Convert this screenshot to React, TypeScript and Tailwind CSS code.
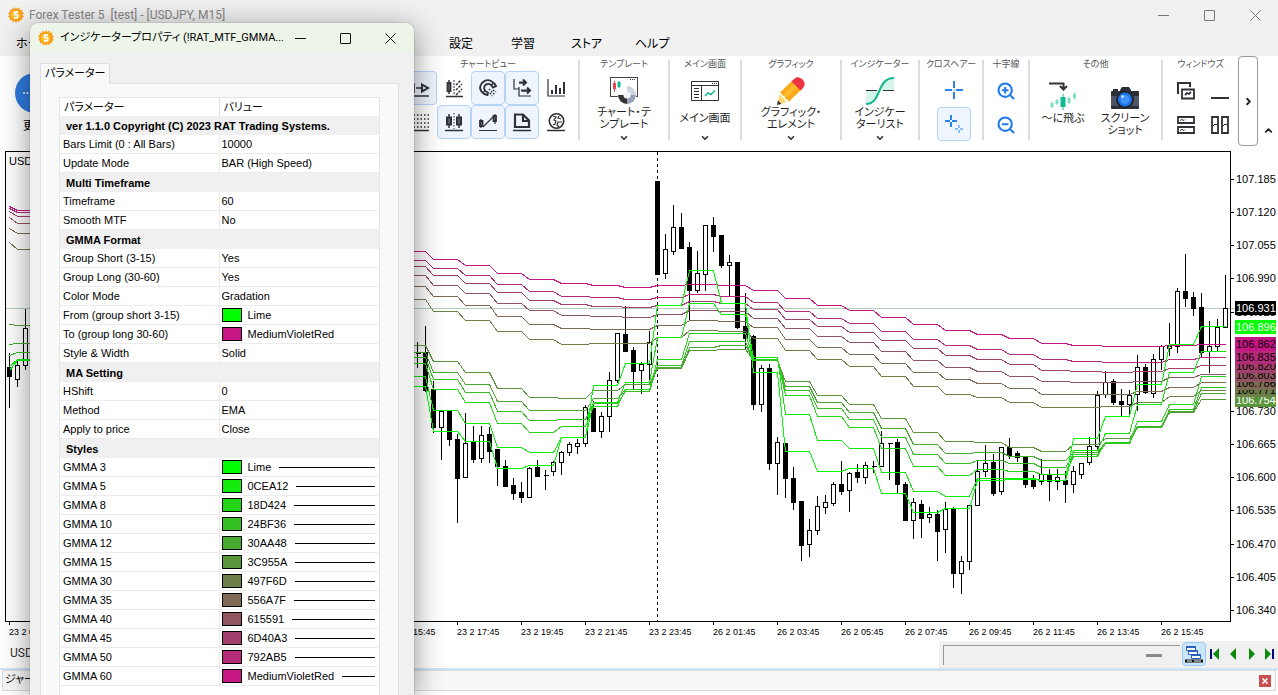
import type { ReactNode } from 'react'
import { ZoomIn, ZoomOut, ChevronDown, ChevronUp, ChevronRight } from 'lucide-react'

const UI_FONT = "font-['Roboto','Noto_Sans_CJK_JP',sans-serif] [font-feature-settings:'palt']"

// [high, body top, body bottom, low, filled]
type Candle = [number, number, number, number, 0 | 1]

const CANDLES: Candle[] = [
  [341, 353, 353, 367, 1], [325, 352, 390, 391, 1], [380, 389, 427, 432, 1], [411, 411, 427, 459, 0],
  [409, 410, 439, 445, 1], [433, 439, 478, 522, 1], [412, 443, 477, 477, 0], [425, 442, 459, 462, 1],
  [425, 435, 458, 462, 0], [426, 434, 451, 462, 1], [449, 449, 466, 485, 1], [459, 466, 486, 486, 1],
  [477, 485, 493, 499, 1], [481, 492, 497, 502, 1], [466, 468, 497, 497, 0], [459, 467, 476, 476, 1],
  [469, 475, 475, 489, 1], [460, 462, 471, 475, 0], [450, 452, 462, 474, 0], [441, 444, 452, 455, 0],
  [438, 443, 446, 453, 0], [404, 407, 443, 446, 0], [400, 408, 431, 431, 1], [411, 416, 431, 437, 0],
  [371, 380, 416, 431, 0], [332, 333, 380, 382, 0], [305, 334, 351, 351, 1], [346, 350, 371, 389, 1],
  [361, 364, 370, 393, 0], [330, 342, 364, 382, 0], [181, 181, 274, 274, 1], [233, 249, 273, 278, 0],
  [204, 227, 251, 254, 0], [212, 227, 248, 248, 1], [241, 247, 290, 320, 1], [250, 273, 290, 292, 0],
  [224, 225, 274, 290, 0], [216, 225, 236, 251, 1], [235, 235, 265, 267, 1], [254, 262, 265, 296, 0],
  [262, 262, 327, 328, 1], [292, 326, 338, 349, 1], [334, 336, 404, 409, 1], [364, 368, 404, 411, 0],
  [363, 368, 463, 469, 1], [436, 442, 463, 494, 0], [443, 443, 478, 497, 1], [466, 478, 502, 509, 1],
  [501, 501, 545, 560, 1], [518, 530, 544, 556, 0], [495, 506, 530, 534, 0], [494, 502, 507, 513, 0],
  [481, 484, 503, 505, 0], [460, 484, 491, 494, 1], [471, 473, 490, 511, 0], [463, 472, 477, 482, 1],
  [461, 465, 477, 483, 0], [460, 466, 466, 472, 1], [430, 443, 466, 466, 0], [442, 443, 443, 479, 1],
  [438, 442, 484, 492, 1], [481, 484, 520, 520, 1], [497, 502, 520, 538, 0], [499, 504, 518, 537, 1],
  [506, 514, 517, 522, 0], [509, 514, 531, 560, 1], [501, 509, 529, 552, 0], [506, 508, 573, 587, 1],
  [555, 561, 573, 593, 0], [505, 505, 561, 569, 0], [460, 471, 505, 505, 0], [444, 463, 471, 476, 0],
  [453, 462, 493, 495, 1], [447, 447, 491, 494, 0], [437, 447, 455, 458, 1], [450, 453, 457, 461, 1],
  [456, 456, 484, 487, 1], [474, 478, 486, 488, 1], [458, 474, 481, 484, 0], [468, 474, 481, 500, 1],
  [468, 477, 481, 489, 0], [470, 480, 484, 502, 1], [465, 471, 484, 492, 0], [462, 463, 474, 478, 0],
  [436, 446, 462, 464, 0], [390, 395, 446, 450, 0], [370, 382, 394, 397, 0], [378, 381, 402, 404, 1],
  [388, 401, 404, 416, 1], [389, 395, 404, 414, 0], [354, 367, 394, 410, 0], [363, 367, 392, 393, 1],
  [353, 359, 393, 397, 0], [344, 346, 359, 369, 0], [322, 346, 348, 355, 0], [287, 291, 346, 352, 0],
  [253, 291, 298, 306, 1], [291, 297, 308, 315, 1], [292, 307, 352, 357, 1], [320, 346, 351, 372, 0],
  [318, 327, 346, 351, 0], [274, 308, 327, 327, 0],
]

const OLD_CANDLES: Candle[] = [
  [352, 367, 376, 407, 1], [359, 365, 379, 386, 0], [308, 328, 365, 369, 0],
]

// one value per hour block, each block is four bars wide
const AVERAGES = [
  { color: '#c71585', values: [251, 259, 265, 273, 279, 283, 285, 287, 285, 284, 285, 290, 298, 305, 310, 317, 324, 330, 334, 338, 343, 345, 346, 346, 345, 344] },
  { color: '#b52a79', values: [260, 268, 275, 284, 291, 296, 297, 299, 297, 294, 296, 302, 311, 318, 323, 331, 339, 345, 349, 354, 359, 361, 362, 362, 359, 357] },
  { color: '#a3406d', values: [266, 275, 283, 292, 300, 304, 306, 307, 305, 301, 303, 309, 319, 326, 332, 340, 348, 355, 359, 364, 370, 371, 372, 371, 368, 365] },
  { color: '#915561', values: [275, 285, 293, 303, 310, 315, 316, 317, 314, 310, 311, 318, 328, 336, 342, 351, 360, 367, 371, 376, 381, 382, 382, 381, 377, 374] },
  { color: '#7f6a55', values: [286, 296, 305, 316, 324, 328, 329, 329, 325, 320, 321, 327, 339, 347, 354, 363, 372, 379, 383, 388, 394, 394, 394, 391, 387, 382] },
  { color: '#6d7f49', values: [299, 311, 320, 331, 339, 344, 343, 343, 337, 330, 331, 338, 350, 359, 366, 376, 386, 394, 397, 402, 407, 407, 406, 402, 396, 390] },
  { color: '#5a953c', values: [345, 361, 372, 388, 397, 398, 390, 384, 368, 350, 349, 360, 381, 395, 404, 418, 432, 441, 442, 447, 451, 444, 438, 427, 412, 399] },
  { color: '#48aa30', values: [352, 372, 384, 401, 410, 410, 398, 389, 367, 347, 345, 360, 386, 402, 412, 428, 444, 453, 452, 456, 460, 452, 442, 427, 411, 393] },
  { color: '#36bf24', values: [357, 379, 392, 411, 420, 419, 403, 391, 365, 341, 341, 360, 390, 408, 419, 437, 454, 463, 460, 463, 467, 454, 443, 426, 409, 387] },
  { color: '#24d418', values: [363, 389, 402, 423, 432, 426, 406, 389, 359, 333, 333, 359, 395, 416, 427, 448, 466, 475, 469, 471, 474, 456, 442, 421, 404, 376] },
  { color: '#12ea0c', values: [376, 410, 423, 447, 452, 437, 402, 382, 337, 303, 314, 357, 414, 440, 448, 472, 491, 496, 478, 478, 480, 450, 433, 404, 372, 351] },
  { color: '#00ff00', values: [386, 431, 441, 468, 465, 437, 385, 363, 305, 270, 303, 372, 451, 471, 468, 493, 512, 508, 480, 479, 480, 438, 416, 384, 344, 326] },
]

const OLD_AVERAGES = [
  { color: '#c71585', from: 206, to: 210 },
  { color: '#b52a79', from: 208, to: 212 },
  { color: '#a3406d', from: 211, to: 216 },
  { color: '#915561', from: 217, to: 223 },
  { color: '#7f6a55', from: 228, to: 233 },
  { color: '#6d7f49', from: 242, to: 249 },
  { color: '#5a953c', from: 324, to: 325 },
  { color: '#48aa30', from: 344, to: 343 },
  { color: '#36bf24', from: 355, to: 352 },
  { color: '#12ea0c', from: 366, to: 359 },
  { color: '#00ff00', from: 370, to: 360 },
]

const PRICE_LABELS = [
  { y: 179, text: '107.185' },
  { y: 212, text: '107.120' },
  { y: 245, text: '107.055' },
  { y: 278, text: '106.990' },
  { y: 312, text: '106.925' },
  { y: 411, text: '106.730' },
  { y: 444, text: '106.665' },
  { y: 477, text: '106.600' },
  { y: 510, text: '106.535' },
  { y: 544, text: '106.470' },
  { y: 577, text: '106.405' },
  { y: 610, text: '106.340' },
]

// drawn bottom up, so that the higher price covers the lower one
const PRICE_TAGS = [
  { y: 400, text: '106.754', bg: '#5a953c', fg: '#ffffff' },
  { y: 390, text: '106.771', bg: '#6d7f49', fg: '#000000' },
  { y: 383, text: '106.786', bg: '#7f6a55', fg: '#000000' },
  { y: 375, text: '106.803', bg: '#915561', fg: '#000000' },
  { y: 366, text: '106.820', bg: '#a3406d', fg: '#000000' },
  { y: 357, text: '106.835', bg: '#b52a79', fg: '#000000' },
  { y: 344, text: '106.862', bg: '#c71585', fg: '#000000' },
  { y: 327, text: '106.896', bg: '#00ff00', fg: '#ffffff' },
  { y: 308, text: '106.931', bg: '#000000', fg: '#ffffff' },
]

const TIME_LABELS = [
  { x: 9, text: '23 2 03:45' },
  { x: 393, text: '23 2 15:45' },
  { x: 457, text: '23 2 17:45' },
  { x: 521, text: '23 2 19:45' },
  { x: 585, text: '23 2 21:45' },
  { x: 649, text: '23 2 23:45' },
  { x: 713, text: '26 2 01:45' },
  { x: 777, text: '26 2 03:45' },
  { x: 841, text: '26 2 05:45' },
  { x: 905, text: '26 2 07:45' },
  { x: 969, text: '26 2 09:45' },
  { x: 1033, text: '26 2 11:45' },
  { x: 1097, text: '26 2 13:45' },
  { x: 1161, text: '26 2 15:45' },
]

type Row =
  | { kind: 'section'; label: string }
  | { kind: 'item'; label: string; value: string; swatch?: string; line?: boolean }

const ROWS: Row[] = [
  { kind: 'section', label: 'ver 1.1.0 Copyright (C) 2023 RAT Trading Systems.' },
  { kind: 'item', label: 'Bars Limit (0 : All Bars)', value: '10000' },
  { kind: 'item', label: 'Update Mode', value: 'BAR (High Speed)' },
  { kind: 'section', label: 'Multi Timeframe' },
  { kind: 'item', label: 'Timeframe', value: '60' },
  { kind: 'item', label: 'Smooth MTF', value: 'No' },
  { kind: 'section', label: 'GMMA Format' },
  { kind: 'item', label: 'Group Short (3-15)', value: 'Yes' },
  { kind: 'item', label: 'Group Long (30-60)', value: 'Yes' },
  { kind: 'item', label: 'Color Mode', value: 'Gradation' },
  { kind: 'item', label: 'From (group short 3-15)', value: 'Lime', swatch: '#00ff00' },
  { kind: 'item', label: 'To (group long 30-60)', value: 'MediumVioletRed', swatch: '#c71585' },
  { kind: 'item', label: 'Style & Width', value: 'Solid' },
  { kind: 'section', label: 'MA Setting' },
  { kind: 'item', label: 'HShift', value: '0' },
  { kind: 'item', label: 'Method', value: 'EMA' },
  { kind: 'item', label: 'Apply to price', value: 'Close' },
  { kind: 'section', label: 'Styles' },
  { kind: 'item', label: 'GMMA 3', value: 'Lime', swatch: '#00ff00', line: true },
  { kind: 'item', label: 'GMMA 5', value: '0CEA12', swatch: '#12ea0c', line: true },
  { kind: 'item', label: 'GMMA 8', value: '18D424', swatch: '#24d418', line: true },
  { kind: 'item', label: 'GMMA 10', value: '24BF36', swatch: '#36bf24', line: true },
  { kind: 'item', label: 'GMMA 12', value: '30AA48', swatch: '#48aa30', line: true },
  { kind: 'item', label: 'GMMA 15', value: '3C955A', swatch: '#5a953c', line: true },
  { kind: 'item', label: 'GMMA 30', value: '497F6D', swatch: '#6d7f49', line: true },
  { kind: 'item', label: 'GMMA 35', value: '556A7F', swatch: '#7f6a55', line: true },
  { kind: 'item', label: 'GMMA 40', value: '615591', swatch: '#915561', line: true },
  { kind: 'item', label: 'GMMA 45', value: '6D40A3', swatch: '#a3406d', line: true },
  { kind: 'item', label: 'GMMA 50', value: '792AB5', swatch: '#b52a79', line: true },
  { kind: 'item', label: 'GMMA 60', value: 'MediumVioletRed', swatch: '#c71585', line: true },
]

function averagePoints(values: number[]) {
  return values
    .map((y, n) => {
      const start = n === 0 ? 380 : 401 + n * 32
      return `${start},${y} ${425 + n * 32},${y}`
    })
    .join(' ')
}

function Bar({ x, candle }: { x: number; candle: Candle }) {
  const [high, top, bottom, low, filled] = candle
  if (top === bottom) {
    return <path d={`M${x} ${high}V${low}M${x - 2} ${top}H${x + 3}`} stroke="#000" />
  }
  return (
    <>
      <path d={`M${x} ${high}V${low}`} stroke="#000" />
      <rect x={x - 2} y={top} width={4} height={bottom - top} fill={filled ? '#000' : '#fff'} stroke="#000" />
    </>
  )
}

function Chart() {
  return (
    <svg viewBox="0 150 1278 491" className="block w-full font-['Liberation_Sans',Arial,sans-serif]" role="img" aria-label="USDJPY M15">
      <g transform="translate(.5 .5)" fill="none" shapeRendering="crispEdges">
        <path d="M5 308H1235" stroke="#b4d0b8" />
        <path d="M657 151V621" stroke="#000" strokeDasharray="3 3" />
        {OLD_CANDLES.map((candle, i) => (
          <Bar key={i} x={9 + i * 8} candle={candle} />
        ))}
        {CANDLES.map((candle, i) => (
          <Bar key={i} x={417 + i * 8} candle={candle} />
        ))}
        {OLD_AVERAGES.map((line) => (
          <polyline key={line.color} points={`9,${line.from} 17,${line.to} 40,${line.to}`} stroke={line.color} />
        ))}
        {AVERAGES.map((line) => (
          <polyline key={line.color} points={averagePoints(line.values)} stroke={line.color} />
        ))}
        <path d="M5 151H1230V621H5Z" stroke="#000" />
        {PRICE_LABELS.map((p) => (
          <path key={p.y} d={`M1230 ${p.y}h3`} stroke="#000" />
        ))}
        {TIME_LABELS.map((t) => (
          <path key={t.x} d={`M${t.x} 621v3`} stroke="#000" />
        ))}
      </g>
      <text x={9} y={165} fontSize={11}>USDJPY</text>
      {PRICE_LABELS.map((p) => (
        <text key={p.y} x={1236} y={p.y + 4} fontSize={11}>{p.text}</text>
      ))}
      {PRICE_TAGS.map((p) => (
        <g key={p.y}>
          <rect x={1235} y={p.y - 7} width={41} height={14} fill={p.bg} shapeRendering="crispEdges" />
          <text x={1236} y={p.y + 4} fontSize={11} fill={p.fg}>{p.text}</text>
        </g>
      ))}
      {TIME_LABELS.map((t) => (
        <text key={t.x} x={t.x} y={635} fontSize={9}>{t.text}</text>
      ))}
    </svg>
  )
}

function AppIcon() {
  return (
    <svg viewBox="0 0 16 16" className="h-4 w-4 shrink-0">
      <path
        d="M8 0l1.200 2L11.400.6l.4 2.300 2.500-.3-.5 2.300 2.200.9L14.500 8l1.500 2-2.200.9.5 2.300-2.500-.3-.4 2.400-2.200-1.300L8 16l-1.200-2-2.200 1.300-.4-2.400-2.500.3.5-2.300L0 10l1.500-2L0 5.800l2.200-.9-.5-2.300 2.500.3.4-2.300L6.800 2z"
        fill="#f9a01b"
      />
      <circle cx="7.600" cy="8" r="4.600" fill="#fbc02d" />
      <path d="M10 5.200H6.600v2.400h1.900c1.600 0 1.600 3.200 0 3.200H6" fill="none" stroke="#fff" strokeWidth="1.700" />
    </svg>
  )
}

function Divider() {
  return <div className="mt-1 h-20 w-0.5 shrink-0 bg-[#dcdcdc]" />
}

function Group({ title, className, children }: { title: string; className: string; children: ReactNode }) {
  return (
    <section className={`flex shrink-0 flex-col items-center ${className}`}>
      <h2 className="h-[15px] text-[9px] leading-4 whitespace-nowrap text-[#555]">{title}</h2>
      {children}
    </section>
  )
}

function ToolButton({ label, active, children }: { label: string; active?: boolean; children: ReactNode }) {
  return (
    <button
      type="button"
      aria-label={label}
      className={`flex h-[34px] w-[34px] items-center justify-center rounded border ${active ? 'border-[#b5d3f7] bg-[#eef5fd]' : 'border-transparent'}`}
    >
      <svg viewBox="0 0 20 20" className="h-5 w-5" fill="none" stroke="#2f3136" strokeWidth="1.500">
        {children}
      </svg>
    </button>
  )
}

function BigButton({ lines, icon, arrow = true }: { lines: string[]; icon: ReactNode; arrow?: boolean }) {
  return (
    <button type="button" className="flex flex-col items-center pt-1">
      <span className={`flex items-center justify-center ${arrow ? 'h-8' : 'h-[34px]'}`}>{icon}</span>
      <span className={`flex flex-col text-[11px] leading-3 whitespace-nowrap text-[#1f1f1f] ${arrow ? 'h-6 justify-center' : ''}`}>
        {lines.map((line) => (
          <span key={line}>{line}</span>
        ))}
      </span>
      {arrow && <ChevronDown className="mt-0.5" size={10} strokeWidth={4} color="#333" />}
    </button>
  )
}

function ChartViewTools() {
  return (
    <div className="grid grid-cols-5">
      <ToolButton label="右端へシフト" active>
        <path d="M1 18H19M4 5v10M6 10h5" />
        <path d="M12 6.500l6 3.500-6 3.500z" strokeWidth="2" />
      </ToolButton>
      <ToolButton label="余白">
        <path d="M2 18.500H19M5 2v14" />
        <path d="M3.500 5h3v8h-3z" strokeWidth="1.800" />
        <path d="M10 2v15" strokeDasharray="2 1" strokeWidth="1" />
        <path d="M12 7l5-5M12 12l6-6M12 17l6-6" strokeDasharray="2.500 1" />
      </ToolButton>
      <ToolButton label="マグネット" active>
        <path
          d="M9.500 17C4 16 1 11.500 2.500 7.500 4 3 9 1 13 3c2 1 4 3 5 5l-3 1.500C13.500 7 11.500 5.500 9.500 6 7 6.500 5.500 9 6.500 11.500c.6 1.500 2 2.500 3.500 3z"
          strokeWidth="1.800"
        />
        <path d="M15 5.500l-2 2M5.500 14l2-2" strokeWidth="1.500" />
        <path d="M11 11l6 6M15 12l3 2M12 15l2 3" strokeDasharray="1.500 1.500" />
      </ToolButton>
      <ToolButton label="スクロール" active>
        <path d="M2 1v10h5M7 5h6M7 9v9h12M10 13h6" strokeWidth="1.200" />
        <path d="M7 4.500h7M11 1.500l3 3-3 3M9 12.500h9M15 9.500l3 3-3 3" strokeWidth="2" />
      </ToolButton>
      <ToolButton label="出来高">
        <path d="M2 1v17H19" strokeWidth="1.200" />
        <path d="M6 12v4M10 7v9M14 10v6M18 4v12" strokeWidth="2" />
      </ToolButton>
      <ToolButton label="グリッド">
        <path d="M0 3H19M0 7H19M0 11H19M0 15H19" strokeDasharray="1.500 2" />
        <path d="M0 18.500H19" />
      </ToolButton>
      <ToolButton label="ローソク足" active>
        <path d="M1 18.500H19M5 2v14M15 2v14" />
        <path d="M3 5.500h4v7H3zM13 5.500h4v7h-4z" strokeWidth="2" />
        <path d="M10 1v16" strokeDasharray="1.500 1.500" strokeWidth="1" />
      </ToolButton>
      <ToolButton label="ラインチャート" active>
        <path d="M1 18.500H19M3 7v9M17 2v10M5 15L16 4" strokeWidth="1.200" />
        <path d="M2 9h2.500v5H2zM15.500 4H18v5h-2.500z" strokeWidth="1.800" />
      </ToolButton>
      <ToolButton label="ページ" active>
        <path d="M1 18.500H19" />
        <path d="M3 2.500h8l6 6v6.500H3zM11 3v6h6" strokeWidth="2.200" />
      </ToolButton>
      <ToolButton label="タイムゾーン">
        <path d="M1 18.500H19" />
        <circle cx="10.500" cy="9" r="7.200" strokeWidth="1.600" />
        <path d="M7 4l3 1-2 3 2 1-1 3-2 1M13 4l-1 2 3 1M16 10h-4l-1 3 2 2" strokeWidth="1.200" />
      </ToolButton>
    </div>
  )
}

function TemplateIcon() {
  return (
    <svg viewBox="0 0 28 28" className="h-7 w-7">
      <rect x=".5" y=".5" width="27" height="19" fill="#fff" stroke="#444" />
      <path d="M20 2.500h6" stroke="#333" strokeDasharray="1 1" />
      <path d="M4.500 4v11" stroke="#f04452" />
      <path d="M3 6h3v6H3z" fill="#f04452" />
      <path d="M9 4v7" stroke="#14b890" />
      <path d="M7.500 5h3v5h-3z" fill="#14b890" />
      <circle cx="17" cy="18" r="9.500" fill="#fff" />
      <path d="M17 18V9a9 9 0 0 1 9 9z" fill="#cfd4e2" />
      <path d="M17 18h9a9 9 0 0 1-9 9z" fill="#98a1b8" />
      <path d="M17 18v9a9 9 0 0 1-9-9z" fill="#333" />
      <path d="M17 18H8a9 9 0 0 1 9-9z" fill="#fff" />
      <circle cx="17" cy="18" r="3.500" fill="#f4f5f8" />
    </svg>
  )
}

function MainScreenIcon() {
  return (
    <svg viewBox="0 0 28 20" className="h-5 w-7" fill="none" stroke="#333">
      <path d="M.5.500h27v19H.5zM.5 4.500h27M10.500 4.500v15" />
      <path d="M21 2.500h5" strokeDasharray="1 1" />
      <path d="M3 7.500h5M3 10.500h5M3 13.500h5M3 16.500h5" strokeWidth="1.200" />
      <path d="M14 15l3-3 3 1.500 4-4" stroke="#14b890" strokeWidth="1.500" />
    </svg>
  )
}

function PencilIcon() {
  return (
    <svg viewBox="0 0 28 28" className="h-7 w-7">
      <path d="M0 28l2.500-11L9.500 25z" fill="#ffd873" />
      <path d="M2.500 16L16 3l9 9-13.500 13c0-2-1-3-3-3 0-2-1-3.500-3-3.500 0-1.500-1-2.500-3-2.500z" fill="#fba919" />
      <path d="M5.500 18.500L18.500 5.500l3 3L8.500 22c0-2-1-3.500-3-3.500z" fill="#fdbb2e" />
      <path d="M14.500 4.500L17 2c3-3 6-2 8.500.5s3 5.500.5 8.500l-2.500 2.500z" fill="#ee3440" />
      <path d="M0 28l1-4.500L4.500 27z" fill="#333" />
    </svg>
  )
}

function IndicatorIcon() {
  return (
    <svg viewBox="0 0 28 28" className="h-7 w-7" fill="none">
      <path d="M14 14C16 6 18 1 28 1v13zM0 14h14c-2 8-4 13-14 13z" fill="#d5f5ed" />
      <path d="M0 13.500h11M17 13.500h11" stroke="#333" />
      <path d="M0 27c16 0 10-26 28-26" stroke="#14b890" strokeWidth="2" />
    </svg>
  )
}

function JumpIcon() {
  return (
    <svg viewBox="0 0 28 28" className="h-7 w-7" fill="none">
      <path d="M0 1.500h14.500V6M11 4l3.500 3.500L18 4" stroke="#333" strokeWidth="2" />
      <path d="M3 19v7M8 17v6M20 14v8M26 10v8" stroke="#7fdcc5" strokeWidth="1" />
      <path d="M3 21v4M8 18v4M20 16v5M25.500 12v4" stroke="#7fdcc5" strokeWidth="3" />
      <path d="M14 12v16" stroke="#14b890" />
      <path d="M14 15v10" stroke="#14b890" strokeWidth="5" />
    </svg>
  )
}

function CameraIcon() {
  return (
    <svg viewBox="0 0 28 22" className="mt-1 h-[22px] w-7">
      <path d="M9 3l2-3h7l2 3v3H9z" fill="#2b2f38" />
      <rect x="2" y="2" width="5" height="3" fill="#2b2f38" />
      <rect x="0" y="4" width="28" height="18" rx="1" fill="#2b2f38" />
      <path d="M0 9h28v10H0z" fill="#4c5566" />
      <circle cx="14" cy="12.500" r="9" fill="#20242c" />
      <circle cx="14" cy="12.500" r="7" fill="#1b74e8" />
      <circle cx="14" cy="12.500" r="4.500" fill="#3f92ff" />
      <circle cx="11.500" cy="9.500" r="1.500" fill="#bcdcff" />
    </svg>
  )
}

function Ribbon() {
  return (
    <div className="flex h-[94px] bg-white">
      <button type="button" className="flex w-[30px] flex-col items-start overflow-visible pt-[17px] pl-[15px]">
        <svg viewBox="0 0 40 40" className="h-10 w-10 overflow-visible">
          <circle cx="20" cy="20" r="20" fill="#2f7de1" />
          <circle cx="9" cy="20" r="1" fill="#fff" />
          <circle cx="12.500" cy="20" r="1" fill="#fff" />
        </svg>
        <span className="mt-1 pl-2 text-[12px] whitespace-nowrap">更新</span>
      </button>
      <div className="flex-1" />
      <Group title="チャートビュー" className="w-[175px] pr-[5px]">
        <ChartViewTools />
      </Group>
      <Divider />
      <Group title="テンプレート" className="w-[88px]">
        <BigButton lines={['チャート・テ', 'ンプレート']} icon={<TemplateIcon />} />
      </Group>
      <Divider />
      <Group title="メイン画面" className="w-[70px]">
        <BigButton lines={['メイン画面']} icon={<MainScreenIcon />} />
      </Group>
      <Divider />
      <Group title="グラフィック" className="w-[98px]">
        <BigButton lines={['グラフィック・', 'エレメント']} icon={<PencilIcon />} />
      </Group>
      <Divider />
      <Group title="インジケーター" className="w-[76px]">
        <BigButton lines={['インジケー', 'ターリスト']} icon={<IndicatorIcon />} />
      </Group>
      <Divider />
      <Group title="クロスヘアー" className="w-[62px]">
        <div className="flex flex-col pt-0.5 pl-1.5">
          <ToolButton label="クロスヘアー">
            <path d="M10 1v7M10 12v7M1 10h7M12 10h7" stroke="#2b83f0" strokeWidth="2" />
            <path d="M9.500 10h1" stroke="#2b83f0" />
          </ToolButton>
          <ToolButton label="クロスヘアー連動" active>
            <path d="M7 1v5M7 8v5M1 7h5M8 7h5" stroke="#2b83f0" strokeWidth="2" />
            <path d="M15 11v3M15 16v3M11 15h3M16 15h3" stroke="#2b83f0" strokeWidth="1" />
          </ToolButton>
        </div>
      </Group>
      <Divider />
      <Group title="十字線" className="w-11">
        <div className="flex flex-col gap-[14px] pt-2.5">
          <button type="button" aria-label="拡大"><ZoomIn size={20} strokeWidth={2.5} color="#1f7aec" /></button>
          <button type="button" aria-label="縮小"><ZoomOut size={20} strokeWidth={2.5} color="#1f7aec" /></button>
        </div>
      </Group>
      <Divider />
      <Group title="その他" className="w-[131px]">
        <div className="flex gap-4 pt-1">
          <BigButton lines={['～に飛ぶ']} icon={<JumpIcon />} arrow={false} />
          <BigButton lines={['スクリーン', 'ショット']} icon={<CameraIcon />} arrow={false} />
        </div>
      </Group>
      <Divider />
      <Group title="ウィンドウズ" className="w-[75px]">
        <div className="grid grid-cols-2 pt-[3px] pl-1">
          <ToolButton label="重ねて表示">
            <path d="M2 13V2h12v4" strokeWidth="2" />
            <path d="M6 8.500h12v9H6zM9 14l2-2 2 1 2-2" strokeWidth="1.800" />
          </ToolButton>
          <ToolButton label="最小化">
            <path d="M1 17H19" strokeWidth="2" />
          </ToolButton>
          <ToolButton label="横に並べる">
            <path d="M2 2h16v6H2zM2 12h16v6H2z" strokeWidth="1.800" />
            <path d="M4 5.500l2-1 2 1 1-1M4 15.500l2-1 2 1 1-1" strokeWidth="1" />
          </ToolButton>
          <ToolButton label="縦に並べる">
            <path d="M2 2h6v16H2zM12 2h6v16h-6z" strokeWidth="1.800" />
            <path d="M3 11l2-2 1 1 2-2M13 11l2-2 1 1 2-2" strokeWidth="1" />
          </ToolButton>
        </div>
      </Group>
      <button type="button" aria-label="次へ" className="flex h-[90px] w-5 shrink-0 items-center justify-center rounded border border-[#9a9a9a]">
        <ChevronRight size={11} strokeWidth={4} color="#222" />
      </button>
      <button type="button" aria-label="リボンを閉じる" className="flex w-5 shrink-0 items-end justify-center pb-3.5">
        <ChevronUp size={11} strokeWidth={4} color="#222" />
      </button>
    </div>
  )
}

function StatusBar() {
  return (
    <div className="flex h-[27px] items-start justify-between bg-white">
      <button type="button" className="pt-[3px] pl-2.5 text-[12px] text-[#333]">USDJPY</button>
      <div className="flex h-full items-start bg-[#f0f0f0] pl-1">
        <div className="mt-1 flex h-5 w-[237px] items-center border-t border-l border-[#999] pl-[202px]">
          <div className="h-[3px] w-4 bg-[#888]" />
        </div>
        <button type="button" aria-label="チャート一覧" className="mt-px ml-0.5 flex h-6 w-6 items-center justify-center rounded border border-[#99c9f2] bg-[#cce6fb]">
          <svg viewBox="0 0 18 18" className="h-[18px] w-[18px]" fill="#fff" stroke="#2a5fc0">
            <path d="M1.500 1.500h9v4h-9zM3.500 5.500h9v4h-9zM6.500 9.500h9v4h-9z" />
            <path d="M1.500 2h9M3.500 6h9M6.500 10h9" strokeWidth="2" />
            <path d="M0 16h18" stroke="#111" strokeWidth="3" />
            <path d="M2 16h5M9 16h7" stroke="#fff" />
          </svg>
        </button>
        <div className="flex items-center gap-1.5 pt-[7px] pr-0.5 pl-1">
          <button type="button" aria-label="最初へ">
            <svg viewBox="0 0 12 12" className="h-3 w-3"><path d="M0 1h2v10H0z" fill="#000a80" /><path d="M9 0v12L3 6z" fill="#0a8a0a" /></svg>
          </button>
          <button type="button" aria-label="前へ">
            <svg viewBox="0 0 12 12" className="h-3 w-3"><path d="M8 0v12L2 6z" fill="#0a8a0a" /></svg>
          </button>
          <button type="button" aria-label="次へ">
            <svg viewBox="0 0 12 12" className="h-3 w-3"><path d="M3 0v12l6-6z" fill="#0a8a0a" /></svg>
          </button>
          <button type="button" aria-label="最後へ">
            <svg viewBox="0 0 12 12" className="h-3 w-3"><path d="M1 0v12l6-6z" fill="#0a8a0a" /><path d="M8 1h2v10H8z" fill="#000a80" /></svg>
          </button>
        </div>
      </div>
    </div>
  )
}

function JournalBar() {
  return (
    <div className="border-t-2 border-[#cfe4f7] bg-white px-0.5">
      <div className="flex h-[21px] items-center justify-between border border-[#dadada] bg-[#f8f8f8] pr-1 pl-0.5">
        <span className="text-[11px]">ジャーナル</span>
        <button type="button" aria-label="閉じる" className="flex h-3 w-3 items-center justify-center bg-[#c75050]">
          <svg viewBox="0 0 6 6" className="h-1.5 w-1.5" stroke="#fff" strokeWidth="1.500"><path d="M.5.500l5 5M5.500.500l-5 5" /></svg>
        </button>
      </div>
    </div>
  )
}

function WindowButtons({ color, className }: { color: string; className: string }) {
  return (
    <div className={`flex shrink-0 items-center ${className}`}>
      <button type="button" aria-label="最小化">
        <svg viewBox="0 0 11 11" className="h-[11px] w-[11px]" stroke={color} fill="none"><path d="M0 5.500h11" /></svg>
      </button>
      <button type="button" aria-label="最大化">
        <svg viewBox="0 0 11 11" className="h-[11px] w-[11px]" stroke={color} fill="none"><rect x=".5" y=".5" width="10" height="10" rx=".5" /></svg>
      </button>
      <button type="button" aria-label="閉じる">
        <svg viewBox="0 0 11 11" className="h-[11px] w-[11px]" stroke={color} fill="none"><path d="M.5.500l10 10M10.500.500l-10 10" /></svg>
      </button>
    </div>
  )
}

function ParameterRow({ row }: { row: Row }) {
  if (row.kind === 'section') {
    return (
      <tr className="h-[19px] bg-[#f0f0f0]">
        <th colSpan={2} scope="rowgroup" className="pl-1.5 text-left font-bold whitespace-nowrap">{row.label}</th>
      </tr>
    )
  }
  return (
    <tr className="h-[19px]">
      <td className="border-r border-b border-[#ececec] pl-[3px]">{row.label}</td>
      <td className="border-b border-[#ececec] pr-1 pl-0.5">
        <div className="flex items-center">
          {row.swatch && (
            <span className="mr-1.5 h-3.5 w-5 shrink-0 border border-black" style={{ backgroundColor: row.swatch }} />
          )}
          <span>{row.value}</span>
          {row.line && <span className="ml-2 h-px flex-1 bg-black" />}
        </div>
      </td>
    </tr>
  )
}

function IndicatorDialog() {
  return (
    <div
      role="dialog"
      aria-label="インジケータープロパティ"
      className="absolute top-[23px] bottom-0 left-[30px] flex w-[384px] flex-col overflow-hidden rounded-t-lg bg-[#f0f0f0] shadow-[0_6px_30px_rgba(0,0,0,0.45),0_0_1px_rgba(0,0,0,0.7)]"
    >
      <header className="flex h-[30px] shrink-0 items-center bg-[#edf5e8] pr-[18px] pl-2">
        <AppIcon />
        <h1 className="ml-1.5 min-w-0 flex-1 text-[11px] whitespace-nowrap">インジケータープロパティ (!RAT_MTF_GMMA...</h1>
        <WindowButtons color="#111" className="gap-[34px]" />
      </header>
      <div className="flex min-h-0 flex-1 flex-col px-2.5 pt-2.5">
        <div role="tablist" className="flex pr-[5px]">
          <button type="button" role="tab" aria-selected className="relative z-10 -mb-px h-[21px] border border-b-0 border-[#dfdfdf] bg-[#f9f9f9] px-1 text-[11px] leading-4">
            パラメーター
          </button>
        </div>
        <div className="mr-[5px] flex min-h-0 flex-1 flex-col border border-b-0 border-[#e2e2e2] bg-[#f9f9f9] px-[18px] pt-[13px]">
          <div className="min-h-0 flex-1 border border-b-0 border-[#e6e6e6] bg-white">
            <table className="w-full table-fixed border-separate border-spacing-0 font-['Liberation_Sans','Noto_Sans_CJK_JP',sans-serif] text-[11px] leading-3">
              <thead>
                <tr className="h-[18px] text-left">
                  <th scope="col" className="border-r border-[#e0e0e0] pl-1 font-normal">パラメーター</th>
                  <th scope="col" className="pl-1 font-normal">バリュー</th>
                </tr>
              </thead>
              <tbody>
                {ROWS.map((row) => (
                  <ParameterRow key={row.label} row={row} />
                ))}
              </tbody>
            </table>
          </div>
        </div>
      </div>
    </div>
  )
}

export default function App() {
  return (
    <div className={`relative min-h-screen overflow-hidden bg-white text-black ${UI_FONT}`}>
      <header className="flex h-[30px] items-center bg-[#f1f1f1] pr-[17px] pl-2">
        <AppIcon />
        <span className="ml-[5px] flex-1 text-[12px] whitespace-pre text-[#858585]">{'Forex Tester 5  [test] - [USDJPY, M15]'}</span>
        <WindowButtons color="#777" className="gap-[35px]" />
      </header>
      <nav className="flex h-[26px] items-center bg-[#f1f1f1] pt-0.5 pl-4 text-[12px]">
        <button type="button" className="w-[433px] text-left">ホーム</button>
        <button type="button" className="w-[62px] text-left">設定</button>
        <button type="button" className="w-[60px] text-left">学習</button>
        <button type="button" className="w-16 text-left">ストア</button>
        <button type="button" className="text-left">ヘルプ</button>
      </nav>
      <Ribbon />
      <Chart />
      <StatusBar />
      <JournalBar />
      <IndicatorDialog />
    </div>
  )
}
